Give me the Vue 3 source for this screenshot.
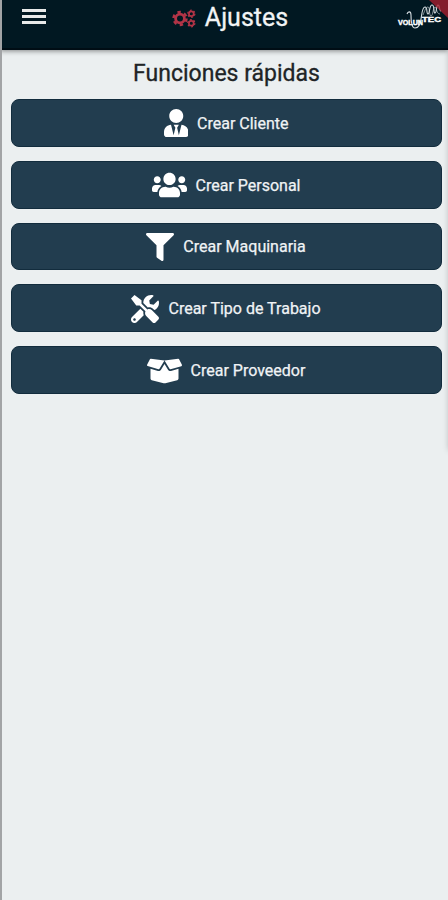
<script setup>
const actions = [
  {
    id: 'cliente',
    label: 'Crear Cliente',
    width: 448,
    path: 'M224 256c70.7 0 128-57.3 128-128S294.7 0 224 0 96 57.3 96 128s57.3 128 128 128zm95.8 32.6L272 480l-32-136 32-56h-96l32 56-32 136-47.8-191.4C56.9 292 0 350.3 0 422.4V464c0 26.5 21.5 48 48 48h352c26.5 0 48-21.5 48-48v-41.6c0-72.1-56.9-130.4-128.2-133.8z'
  },
  {
    id: 'personal',
    label: 'Crear Personal',
    width: 640,
    path: 'M96 224c35.3 0 64-28.7 64-64s-28.7-64-64-64-64 28.7-64 64 28.7 64 64 64zm448 0c35.3 0 64-28.7 64-64s-28.7-64-64-64-64 28.7-64 64 28.7 64 64 64zm32 32h-64c-17.6 0-33.5 7.1-45.1 18.6 40.3 22.1 68.9 62 75.1 109.4h66c17.7 0 32-14.3 32-32v-32c0-35.3-28.7-64-64-64zm-256 0c61.9 0 112-50.1 112-112S381.9 32 320 32 208 82.1 208 144s50.1 112 112 112zm76.8 32h-8.3c-20.8 10-43.9 16-68.5 16s-47.6-6-68.5-16h-8.3C179.6 288 128 339.6 128 403.2V432c0 26.5 21.5 48 48 48h288c26.5 0 48-21.5 48-48v-28.8c0-63.6-51.6-115.2-115.2-115.2zm-223.7-13.4C161.5 263.1 145.6 256 128 256H64c-35.3 0-64 28.7-64 64v32c0 17.7 14.3 32 32 32h65.9c6.3-47.4 34.9-87.3 75.2-109.4z'
  },
  {
    id: 'maquinaria',
    label: 'Crear Maquinaria',
    width: 512,
    path: 'M487.976 0H24.028C2.71 0-8.047 25.866 7.058 40.971L192 225.941V432c0 7.831 3.821 15.17 10.237 19.662l80 55.98C298.02 518.69 320 507.493 320 487.98V225.941l184.947-184.97C520.021 25.896 509.338 0 487.976 0z'
  },
  {
    id: 'trabajo',
    label: 'Crear Tipo de Trabajo',
    width: 512,
    path: 'M501.1 395.7L384 278.6c-23.1-23.1-57.6-27.6-85.4-13.9L192 158.1V96L64 0 0 64l96 128h62.1l106.6 106.6c-13.6 27.8-9.2 62.3 13.9 85.4l117.1 117.1c14.6 14.6 38.2 14.6 52.7 0l52.7-52.7c14.5-14.6 14.5-38.2 0-52.7zM331.7 225c28.3 0 54.9 11 74.9 31l19.4 19.4c15.8-6.9 30.8-16.5 43.8-29.5 37.1-37.1 49.7-89.3 37.9-136.7-2.2-9-13.5-12.1-20.1-5.5l-74.4 74.4-67.9-11.3L334 98.9l74.4-74.4c6.6-6.6 3.4-17.9-5.7-20.2-47.4-11.7-99.6.9-136.6 37.9-28.5 28.5-41.9 66.1-41.2 103.6l82.1 82.1c8.1-1.9 16.5-2.9 24.7-2.9zm-103.9 82l-56.7-56.7L18.7 402.8c-25 25-25 65.5 0 90.5s65.5 25 90.5 0l123.6-123.6c-7.6-19.9-9.9-41.6-5-62.7zM64 472c-13.2 0-24-10.8-24-24 0-13.3 10.7-24 24-24s24 10.7 24 24c0 13.2-10.7 24-24 24z'
  },
  {
    id: 'proveedor',
    label: 'Crear Proveedor',
    width: 640,
    path: 'M425.7 256c-16.9 0-32.8-9-41.4-23.4L320 126l-64.2 106.6c-8.7 14.5-24.6 23.5-41.5 23.5-4.5 0-9-.6-13.3-1.9L64 215v178c0 14.7 10 27.5 24.2 31l216.2 54.1c10.2 2.5 20.9 2.5 31 0L551.8 424c14.2-3.6 24.2-16.4 24.2-31V215l-137 39.1c-4.3 1.3-8.8 1.9-13.3 1.9zm212.6-112.2L586.8 41c-3.1-6.2-9.8-9.8-16.7-8.9L320 64l91.7 152.1c3.8 6.3 11.4 9.3 18.5 7.3l197.9-56.5c9.9-2.9 14.7-13.9 10.2-23.1zM53.2 41L1.7 143.8c-4.6 9.2.3 20.2 10.1 23l197.9 56.5c7.1 2 14.7-1 18.5-7.3L320 64 69.8 32.1c-6.9-.8-13.5 2.7-16.6 8.9z'
  }
]
</script>

<template>
  <div class="screen">
    <header class="topbar">
      <button class="menu-btn" aria-label="Menú">
        <span class="menu-line"></span>
        <span class="menu-line"></span>
        <span class="menu-line"></span>
      </button>

      <div class="title">
        <svg class="title-icon" width="24" height="19" viewBox="0 0 24 19" fill="none" stroke="#b23447">
          <circle cx="8" cy="9.5" r="4.4" stroke-width="2.8" />
          <circle cx="8" cy="9.5" r="6.5" stroke-width="2.4" stroke-dasharray="3.4 3.41" />
          <circle cx="19.3" cy="4.8" r="2.4" stroke-width="1.7" />
          <circle cx="19.3" cy="4.8" r="3.6" stroke-width="1.2" stroke-dasharray="1.9 1.87" />
          <circle cx="19.3" cy="14.2" r="2.4" stroke-width="1.7" />
          <circle cx="19.3" cy="14.2" r="3.6" stroke-width="1.2" stroke-dasharray="1.9 1.87" />
        </svg>
        <h1 class="title-text">Ajustes</h1>
      </div>

      <svg class="logo" width="52" height="34" viewBox="0 0 52 34">
        <g fill="none" stroke="#d5dce0" stroke-width="1.1">
          <path d="M12 14c1-3 4-3 4 1 0 5 0 13 4 13s5-4 6-9 1-12 4-12 1 7 3 7 1-9 4-9 1 8 3 8 1-8 3-8 1 6 3 6" />
          <path d="M28 15c2-5 3-8 5-8s1 9 3 9 2-9 4-9 1 7 5 7" stroke-width="0.6" />
        </g>
        <text x="3" y="25" class="logo-text" textLength="25" lengthAdjust="spacingAndGlyphs">VOLUN</text>
        <text x="27" y="22" class="logo-text" textLength="19" lengthAdjust="spacingAndGlyphs">TEC</text>
      </svg>
      <span class="corner"></span>
    </header>

    <main class="content">
      <h2 class="section-title">Funciones rápidas</h2>
      <div class="actions">
        <button v-for="action in actions" :key="action.id" class="action-btn" :class="action.id">
          <svg class="action-icon" :viewBox="`0 0 ${action.width} 512`">
            <path :d="action.path" />
          </svg>
          <span class="action-label">{{ action.label }}</span>
        </button>
      </div>
    </main>
    <span class="edge-shadow"></span>
  </div>
</template>

<style>
body {
  margin: 0;
  background: #ebeff0;
}
</style>

<style scoped>
.screen {
  position: relative;
  box-sizing: border-box;
  height: 900px;
  overflow: hidden;
  border-left: 2px solid #a2a4a6;
  background: #ebeff0;
  font-family: Roboto, "Liberation Sans", sans-serif;
}

.topbar {
  position: relative;
  display: grid;
  grid-template-columns: 1fr auto 1fr;
  align-items: start;
  box-sizing: border-box;
  height: 50px;
  margin-left: -2px;
  background: #011822;
  border-bottom: 2px solid #000d15;
  box-shadow: 0 1px 5px rgba(0, 0, 0, 0.45);
}

.menu-btn {
  display: flex;
  flex-direction: column;
  gap: 3px;
  width: 24px;
  margin: 9px 0 0 22px;
  padding: 0;
  background: none;
  border: none;
}

.menu-line {
  height: 3px;
  background: #e8e9e9;
}

.title {
  display: flex;
  align-items: flex-start;
  gap: 9px;
  padding-left: 12px;
}

.title-icon {
  margin-top: 9px;
}

.title-text {
  margin: 3px 0 0;
  font-size: 25px;
  line-height: 30px;
  font-weight: 400;
  color: #f2f4f5;
  -webkit-text-stroke: 0.3px #f2f4f5;
}

.logo {
  justify-self: end;
  margin-right: 1px;
}

.logo-text {
  font-family: "Liberation Sans", sans-serif;
  font-size: 7px;
  font-weight: 700;
  fill: #fff;
  stroke: #fff;
  stroke-width: 0.4px;
}

.corner {
  position: absolute;
  top: 0;
  right: 0;
  width: 19px;
  height: 18px;
  background: #a51f30;
  opacity: 0.8;
  clip-path: polygon(0 0, 100% 0, 100% 100%);
}

.content {
  padding: 9px 6px 0 9px;
}

.section-title {
  margin: 0 0 10px;
  font-size: 23px;
  line-height: 30px;
  font-weight: 400;
  color: #202426;
  -webkit-text-stroke: 0.3px #202426;
  text-align: center;
}

.actions {
  display: flex;
  flex-direction: column;
  gap: 14px;
}

.action-btn {
  display: flex;
  align-items: center;
  justify-content: center;
  gap: 9px;
  height: 47.8px;
  padding: 1px 1px 0 0;
  background: #223d4f;
  border: 1px solid #122c3d;
  border-radius: 8px;
  font-family: inherit;
  color: #f0f3f5;
}

.action-icon {
  height: 28px;
  fill: #fff;
}

.action-label {
  padding-top: 1px;
  font-size: 16px;
  line-height: 20px;
  -webkit-text-stroke: 0.25px #f0f3f5;
}

.edge-shadow {
  position: absolute;
  top: 50px;
  right: -7px;
  width: 6px;
  height: 400px;
  box-shadow: 0 0 6px rgba(0, 0, 0, 0.25);
}
</style>
